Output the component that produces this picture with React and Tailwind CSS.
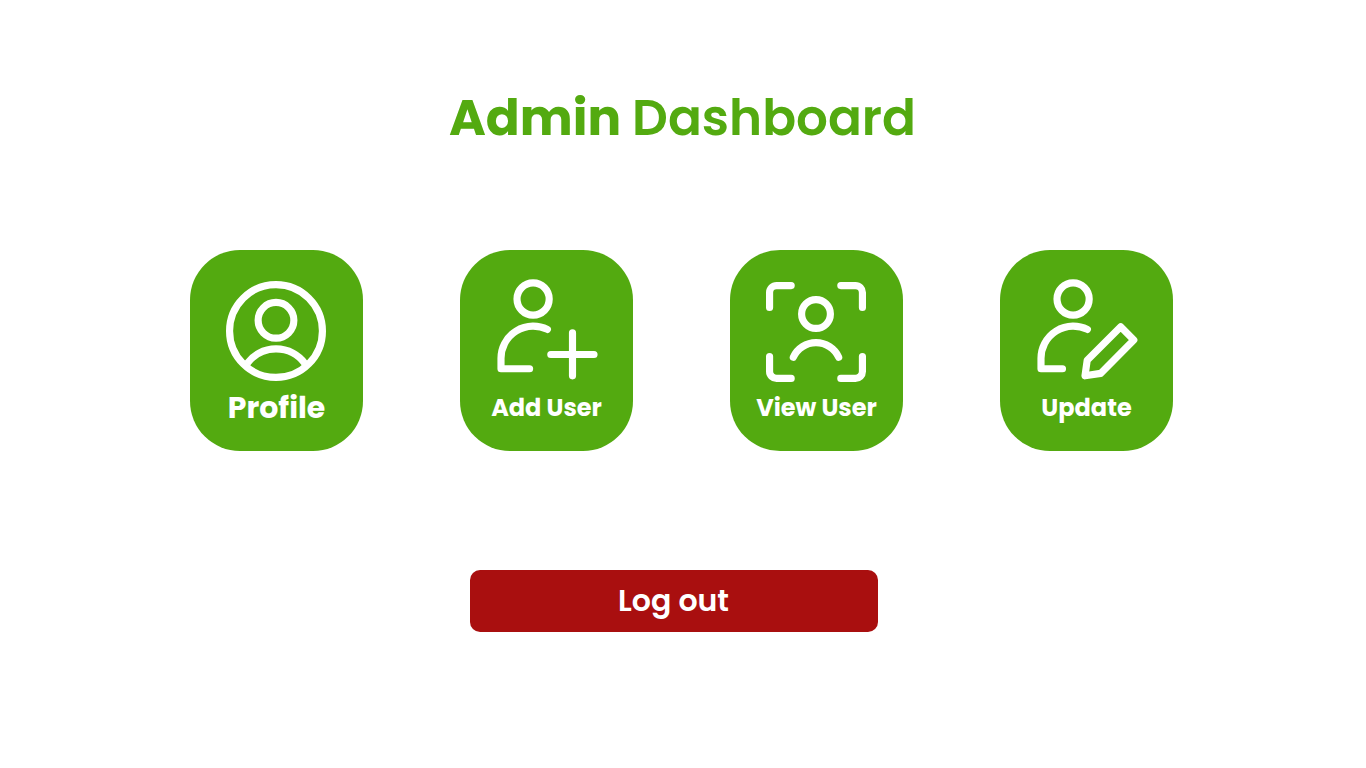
const stroke = {
  fill: "none",
  stroke: "currentColor",
  strokeWidth: 7.15,
  strokeLinecap: "round",
  strokeLinejoin: "round",
};

function Icon({ children }) {
  return (
    <svg className="h-[108px] w-[107px] shrink-0" viewBox="33 27 107 108" {...stroke}>
      {children}
    </svg>
  );
}

const ProfileIcon = () => (
  <Icon>
    <circle cx="86" cy="81" r="46.43" />
    <circle cx="86" cy="70.3" r="17.87" />
    <path strokeLinecap="butt" d="M57.2 113.3A36 36 0 0 1 114.8 113.3" />
  </Icon>
);

const AddIcon = () => (
  <Icon>
    <circle cx="73.1" cy="49" r="16.1" />
    <path d="M87.4 79.4A32.2 32.2 0 0 0 41 108.2V118.7H69.6" />
    <path d="M112.5 82.8V125.8M90.8 104.5H134" />
  </Icon>
);

const ViewIcon = () => (
  <Icon>
    <path d="M39.57 57.5V42.57A7 7 0 0 1 46.57 35.57H61.2M110.8 35.57H125.43A7 7 0 0 1 132.43 42.57V57.5M132.43 106.5V121.43A7 7 0 0 1 125.43 128.43H110.8M61.2 128.43H46.57A7 7 0 0 1 39.57 121.43V106.5" />
    <circle cx="86" cy="64" r="14.4" />
    <path d="M63.3 107.2A25 25 0 0 1 108.7 107.2" />
  </Icon>
);

const UpdateIcon = () => (
  <Icon>
    <circle cx="73.1" cy="49" r="16.1" />
    <path d="M87.4 79.4A32.2 32.2 0 0 0 41 108.2V118.7H62.5" />
    <path d="M120.7 76.8L133.8 90L100.6 123.4L85 125.8L87.2 110.2Z" />
  </Icon>
);

const cards = [
  { label: "Profile", Icon: ProfileIcon, text: "pt-[1px] text-[30px]" },
  { label: "Add User", Icon: AddIcon, text: "pt-[4px] text-[24px]" },
  { label: "View User", Icon: ViewIcon, text: "pt-[4px] text-[24px]" },
  { label: "Update", Icon: UpdateIcon, text: "pt-[4px] text-[24px]" },
];

export default function App() {
  return (
    <main className="flex h-screen w-full flex-col overflow-hidden bg-white pt-[93px] font-['Poppins','Inter',sans-serif] antialiased [text-rendering:geometricPrecision]">
      <h1 className="h-[50px] w-[1366px] whitespace-nowrap pl-[449px] text-[50px] font-semibold leading-none text-[#53aa10]">
        <span className="-mr-px font-bold">Admin</span> Dashboard
      </h1>
      <section className="mt-[107px] flex gap-[97px] pl-[190px]">
        {cards.map(({ label, Icon: CardIcon, text }) => (
          <button
            key={label}
            className="flex h-[201px] w-[173px] shrink-0 flex-col items-center rounded-[50px] bg-[#53aa10] pt-[27px] text-white"
          >
            <CardIcon />
            <span className="flex h-12 items-start pt-[7px]">
              <span className={`whitespace-nowrap font-bold leading-none ${text}`}>{label}</span>
            </span>
          </button>
        ))}
      </section>
      <button className="ml-[470px] mt-[119px] flex h-[62px] w-[408px] shrink-0 items-center justify-center rounded-[10px] bg-[#a90f0f] pr-px text-[30px] font-semibold leading-none text-white">
        Log out
      </button>
    </main>
  );
}
